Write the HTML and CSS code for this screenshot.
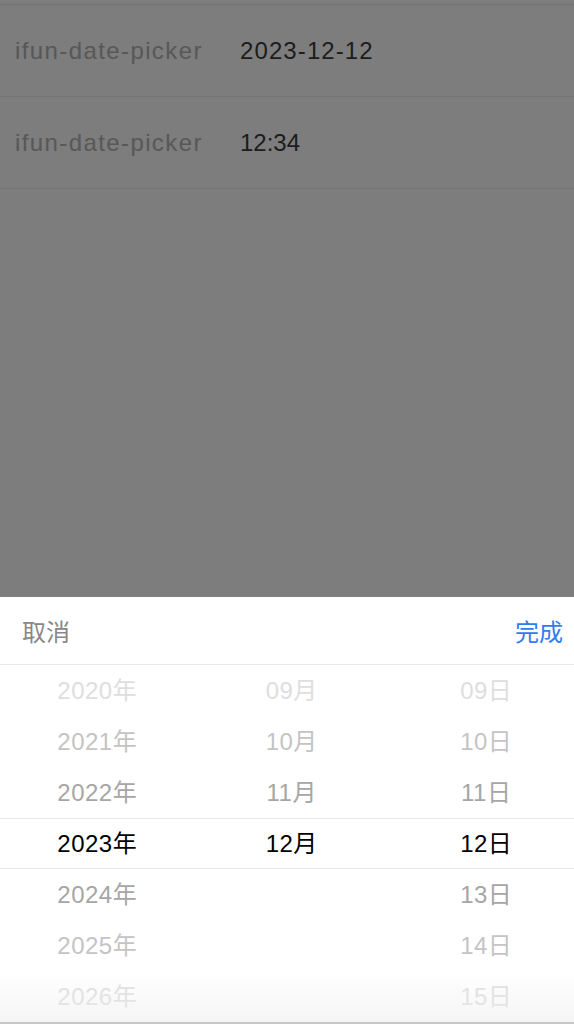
FILE: index.html
```html
<!DOCTYPE html>
<html lang="zh-CN">
<head>
  <meta charset="UTF-8" />
  <meta name="viewport" content="width=device-width, initial-scale=1.0"/>
  <title>ifun-date-picker</title>
  <link rel="stylesheet" href="styles.css">
</head>
<body>
  <div class="list">
    <div class="cell">
      <span class="label">ifun-date-picker</span>
      <span class="value">2023-12-12</span>
    </div>
    <div class="cell">
      <span class="label">ifun-date-picker</span>
      <span class="value time">12:34</span>
    </div>
  </div>

  <div class="mask"></div>

  <div class="popup">
    <div class="toolbar">
      <span class="cancel">取消</span>
      <span class="confirm">完成</span>
    </div>
    <div class="picker">
      <div class="band"></div>
      <div class="column">
        <div class="item far3">2020年</div>
        <div class="item far2">2021年</div>
        <div class="item far1">2022年</div>
        <div class="item active">2023年</div>
        <div class="item far1">2024年</div>
        <div class="item far2">2025年</div>
        <div class="item far3">2026年</div>
      </div>
      <div class="column">
        <div class="item far3">09月</div>
        <div class="item far2">10月</div>
        <div class="item far1">11月</div>
        <div class="item active">12月</div>
      </div>
      <div class="column">
        <div class="item far3">09日</div>
        <div class="item far2">10日</div>
        <div class="item far1">11日</div>
        <div class="item active">12日</div>
        <div class="item far1">13日</div>
        <div class="item far2">14日</div>
        <div class="item far3">15日</div>
      </div>
      <div class="fade"></div>
    </div>
  </div>
</body>
</html>
```

FILE: styles.css
```css
body {
  margin: 0;
  font-family: "Liberation Sans", "Noto Sans CJK SC", sans-serif;
  background-color: #fafafa;
  height: 1024px;
  overflow: hidden;
}
.list {
  padding-top: 4px;
}
.list::before {
  content: "";
  display: block;
  height: 1px;
  background-color: #e6e6e6;
}
.cell {
  display: flex;
  align-items: center;
  height: 91px;
  padding-left: 15px;
  border-bottom: 1px solid #ececec;
  font-size: 24px;
}
.label {
  width: 225px;
  color: #b0b0b0;
  letter-spacing: 1.4px;
}
.value {
  color: #3a3a3a;
  letter-spacing: 1.1px;
}
.value.time {
  letter-spacing: 0;
}
.mask {
  position: fixed;
  inset: 0;
  background-color: rgba(0, 0, 0, 0.5);
}
.popup {
  position: fixed;
  left: 0;
  right: 0;
  bottom: 0;
  height: 427px;
  background-color: #fff;
}
.toolbar {
  display: flex;
  justify-content: space-between;
  align-items: center;
  height: 67px;
  padding: 0 11px 0 22px;
  border-bottom: 1px solid #ebebeb;
  font-size: 24px;
}
.cancel {
  color: #888;
}
.confirm {
  color: #2f7bf0;
}
.picker {
  position: relative;
  display: grid;
  grid-template-columns: repeat(3, 194.5px);
  height: 359px;
  overflow: hidden;
}
.band {
  position: absolute;
  left: 0;
  right: 0;
  top: 153px;
  height: 49px;
  border-top: 1px solid #e8e8e8;
  border-bottom: 1px solid #e8e8e8;
}
.column {
  display: flex;
  flex-direction: column;
  align-items: center;
}
.item {
  height: 51px;
  line-height: 51px;
  font-size: 24px;
  letter-spacing: 0.5px;
  color: #000;
}
.far1 {
  color: #a6a6a6;
}
.far2 {
  color: #c4c4c4;
}
.far3 {
  color: #dedede;
}
.fade {
  position: absolute;
  left: 0;
  right: 0;
  bottom: 0;
  height: 50px;
  background: linear-gradient(rgba(255, 255, 255, 0), rgba(238, 238, 238, 0.6));
  border-bottom: 2px solid #c8c8c8;
}
```
